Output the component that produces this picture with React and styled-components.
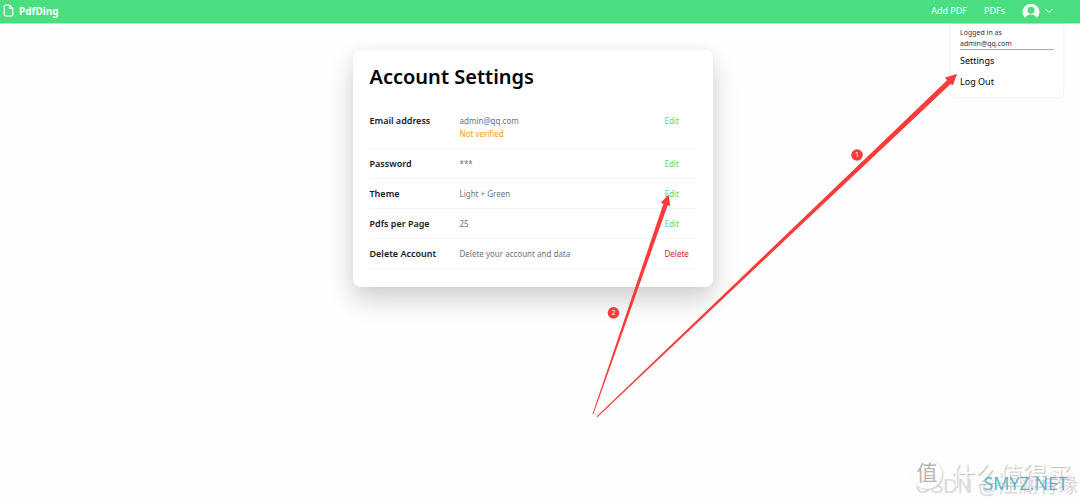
import React from 'react';
import styled, { createGlobalStyle, css } from 'styled-components';


const GlobalStyle = createGlobalStyle`
  * {
    box-sizing: border-box;
  }

  body {
    margin: 0;
    background-color: #FEFEFE;
    font-family: "Noto Sans", "Noto Sans CJK SC", sans-serif;
    color: #111;
  }
`

const Page = styled.div`
  position: relative;
  min-height: 100vh;
  overflow: hidden;
`

const Header = styled.header`
  display: flex;
  align-items: center;
  justify-content: space-between;
  height: 24px;
  padding: 0 27px 2px 2px;
  background-color: #4ADE80;
  border-bottom: 1px solid #A4EEBF;
  color: #FFF;
`

const Brand = styled.a`
  display: flex;
  align-items: center;
  gap: 4px;
  color: inherit;
  font-size: 10px;
  font-weight: 700;
  text-decoration: none;
`

const Nav = styled.nav`
  display: flex;
  align-items: center;
  gap: 17px;
`

const NavLink = styled.a`
  color: inherit;
  font-size: 9px;
  line-height: 20px;
  text-decoration: none;
`

const UserButton = styled.button`
  display: flex;
  align-items: center;
  gap: 5px;
  height: 20px;
  padding: 0;
  border: none;
  background: none;
  color: inherit;
`

const Menu = styled.div`
  position: absolute;
  top: 24px;
  right: 17px;
  width: 112px;
  height: 73px;
  padding: 3px 9px;
  background-color: #FFF;
  border-radius: 0 0 4px 4px;
  box-shadow: 0 0 2px rgba(0, 0, 0, .16);
`

const MenuUser = styled.div`
  border-bottom: 1px solid #AAA;
  color: #333;
  font-size: 7px;
  line-height: 11px;
`

const MenuLink = styled.a`
  display: block;
  color: #000;
  font-size: 9px;
  line-height: 21px;
  text-decoration: none;
`

const Main = styled.main`
  display: flex;
  justify-content: center;
  padding: 26px 15px 0 0;
`

const Card = styled.section`
  width: 33%;
  min-width: 360px;
  padding: 12px 16px 18px 17px;
  background-color: #FFF;
  border-radius: 8px;
  box-shadow: 0 13px 26px rgba(0, 0, 0, .18), 0 0 12px rgba(0, 0, 0, .04);
`

const Title = styled.h1`
  margin: 0 0 14px;
  color: #000;
  font-size: 20px;
  font-weight: 600;
  line-height: 30px;
`

const List = styled.dl`
  margin: 0;
`

const Row = styled.div`
  display: grid;
  grid-template-columns: 90px 1fr 32px;
  padding: 8px 0;
  border-bottom: 1px solid #F3F4F6;
  font-size: 8px;
  line-height: 13px;
`

const Label = styled.dt`
  color: #111827;
  font-size: 9px;
  font-weight: 600;
`

const Value = styled.dd`
  margin: 0;
  color: #6B7280;
`

const Warning = styled.div`
  color: #F59E0B;
`

const Action = styled.a`
  color: #4ADE80;
  text-decoration: none;

  ${({ $danger }) => $danger && css`
    color: #DC2626;
  `}
`

const Annotations = styled.svg`
  position: absolute;
  top: 0;
  left: 0;
  width: 100%;
  pointer-events: none;
`

const Watermark = styled.div`
  position: absolute;
  right: 2px;
  bottom: 2px;
  width: 166px;
  height: 42px;
  pointer-events: none;
`

const MarkText = styled.span`
  position: absolute;
  white-space: nowrap;
  color: #FFF;
  text-shadow: 1px 1px 1px #BBB;
  font-family: "Liberation Sans", "Noto Sans CJK SC", sans-serif;
`

const ShopMark = styled(MarkText)`
  top: 4px;
  right: 7px;
  font-size: 24px;
  line-height: 28px;
`

const AuthorMark = styled(MarkText)`
  right: 0;
  bottom: 2px;
  color: #D8D8D8;
  text-shadow: none;
  font-size: 20px;
  line-height: 24px;
`

const Seal = styled(MarkText)`
  top: 1px;
  left: 0;
  width: 30px;
  height: 30px;
  border-radius: 50%;
  background-color: #FFF;
  box-shadow: 1px 1px 2px #CCC;
  color: #B5B5B5;
  text-shadow: none;
  font-size: 21px;
  line-height: 28px;
  text-align: center;
`

const SiteMark = styled.span`
  position: absolute;
  right: 10px;
  bottom: 5px;
  color: #55B5C8;
  font-family: "Open Sans", sans-serif;
  font-size: 18px;
  font-weight: 500;
  line-height: 24px;
`

const rows = [
  { label: 'Email address', value: 'admin@qq.com', warning: 'Not verified', action: 'Edit' },
  { label: 'Password', value: '***', action: 'Edit' },
  { label: 'Theme', value: 'Light + Green', action: 'Edit' },
  { label: 'Pdfs per Page', value: '25', action: 'Edit' },
  { label: 'Delete Account', value: 'Delete your account and data', action: 'Delete', danger: true },
];

const FileIcon = () => (
  <svg width="13" height="13" viewBox="0 0 24 24" fill="none" stroke="currentColor" strokeWidth="2" strokeLinejoin="round">
    <path d="M6 2h8l6 6v12a2 2 0 0 1-2 2H6a2 2 0 0 1-2-2V4a2 2 0 0 1 2-2z" />
    <path d="M14 2v6h6" />
  </svg>
)

const AvatarIcon = () => (
  <svg width="18" height="16" viewBox="0 0 18 16">
    <path fill="#FFF" d="M3.4 15.2A8.5 8.3 0 1 1 14.6 15.2C14 12.8 11.8 11.6 9 11.6S4 12.8 3.4 15.2z" />
    <circle cx="9" cy="7.2" r="3.5" fill="#4ADE80" />
  </svg>
)

const ChevronIcon = () => (
  <svg width="8" height="6" viewBox="0 0 8 6" fill="none" stroke="currentColor">
    <path d="M.5 1 4 4.5 7.5 1" />
  </svg>
)

class App extends React.Component {
  render() {
    return (
      <Page>
        <GlobalStyle />

        <Header>
          <Brand href="#"><FileIcon />PdfDing</Brand>
          <Nav>
            <NavLink href="#add">Add PDF</NavLink>
            <NavLink href="#pdfs">PDFs</NavLink>
            <UserButton type="button" aria-label="User menu"><AvatarIcon /><ChevronIcon /></UserButton>
          </Nav>
        </Header>

        <Menu>
          <MenuUser>Logged in as<br />admin@qq.com</MenuUser>
          <MenuLink href="#settings">Settings</MenuLink>
          <MenuLink href="#logout">Log Out</MenuLink>
        </Menu>

        <Main>
          <Card>
            <Title>Account Settings</Title>
            <List>
              {rows.map(row =>
                <Row key={row.label}>
                  <Label>{row.label}</Label>
                  <Value>
                    {row.value}
                    {row.warning && <Warning>{row.warning}</Warning>}
                  </Value>
                  <Action href="#edit" $danger={row.danger}>{row.action}</Action>
                </Row>
              )}
            </List>
          </Card>
        </Main>

        <Watermark>
          <AuthorMark>CSDN @江湖有缘</AuthorMark>
          <ShopMark>什么值得买</ShopMark>
          <Seal>值</Seal>
          <SiteMark>SMYZ.NET</SiteMark>
        </Watermark>

        <Annotations viewBox="0 0 1080 502">
          <g fill="#FA3B3B">
            <path d="M592.5 414 663.4 203.8 660.6 202.8 668.8 194.6 670.2 206.2 667.7 205.3 593.3 414.5z" />
            <path d="M596.5 416.5 947 80.2 945.2 77.6 957 74 952.9 85.2 950.6 83.9 597.3 417.3z" />
            <circle cx="613.5" cy="312.8" r="5.8" />
            <circle cx="857" cy="155" r="5.8" />
          </g>
          <g fill="#FFF" fontSize="7" textAnchor="middle">
            <text x="613.5" y="315">2</text>
            <text x="857" y="157">1</text>
          </g>
        </Annotations>
      </Page>
    )
  }
};

export default App;
